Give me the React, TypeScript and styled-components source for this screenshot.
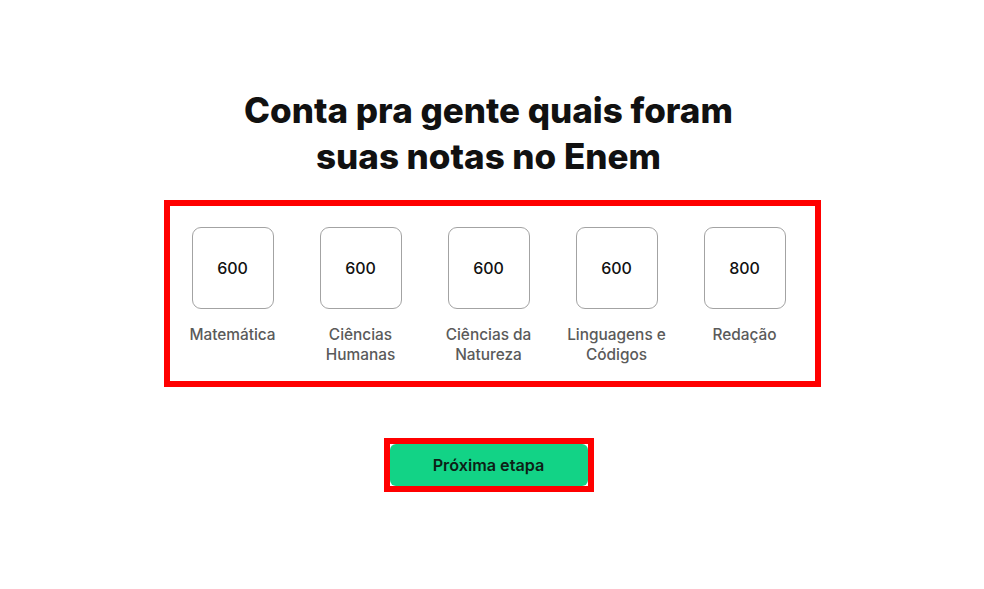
import React from "react";
import styled, { createGlobalStyle } from "styled-components";

const Global = createGlobalStyle`
  html, body { margin: 0; padding: 0; background: #ffffff; }
  body { font-family: Inter, "Noto Sans", "DejaVu Sans", sans-serif; color: #111; }
  * { box-sizing: border-box; }
`;

const Page = styled.main`
  display: flex;
  flex-direction: column;
  align-items: center;
  padding-top: 87px;
  min-height: 589px;
`;

const Title = styled.h1`
  margin: 0 7px 0 0;
  font-size: 35px;
  line-height: 46px;
  font-weight: 800;
  letter-spacing: 0px;
  text-align: center;
  color: #111;
`;

const Frame = styled.section`
  margin-top: 21px;
  width: 657px;
  border: 6px solid #ff0000;
  padding: 21px 0 16px 0;
`;

const Grid = styled.div`
  display: grid;
  grid-template-columns: repeat(5, 128px);
  margin-left: -1px;
`;

const Subject = styled.div`
  display: flex;
  flex-direction: column;
  align-items: center;
  gap: 16px;
`;

const ScoreBox = styled.div`
  width: 82px;
  height: 82px;
  border: 1px solid #a3a3a3;
  border-radius: 9px;
  display: flex;
  align-items: center;
  justify-content: center;
  font-size: 16px;
  font-weight: 500;
  color: #111;
`;

const Label = styled.div`
  font-size: 15.4px;
  line-height: 20px;
  font-weight: 500;
  color: #5a5a5a;
  text-align: center;
`;

const ButtonFrame = styled.div`
  margin: 51px 7px 0 0;
  border: 6px solid #ff0000;
  display: flex;
`;

const NextButton = styled.button`
  width: 198px;
  height: 42px;
  border: none;
  border-radius: 6px;
  background: #12d386;
  color: #0d1f16;
  font-family: Inter, "Noto Sans", sans-serif;
  font-size: 16.2px;
  font-weight: 600;
  cursor: pointer;
`;

const subjects = [
  { score: "600", label: ["Matemática"] },
  { score: "600", label: ["Ciências", "Humanas"] },
  { score: "600", label: ["Ciências da", "Natureza"] },
  { score: "600", label: ["Linguagens e", "Códigos"] },
  { score: "800", label: ["Redação"] },
];

export default function App() {
  return (
    <>
      <Global />
      <Page>
        <Title>
          Conta pra gente quais foram
          <br />
          suas notas no Enem
        </Title>
        <Frame>
          <Grid>
            {subjects.map((s, i) => (
              <Subject key={i}>
                <ScoreBox>{s.score}</ScoreBox>
                <Label>
                  {s.label.map((l, j) => (
                    <div key={j}>{l}</div>
                  ))}
                </Label>
              </Subject>
            ))}
          </Grid>
        </Frame>
        <ButtonFrame>
          <NextButton>Próxima etapa</NextButton>
        </ButtonFrame>
      </Page>
    </>
  );
}
